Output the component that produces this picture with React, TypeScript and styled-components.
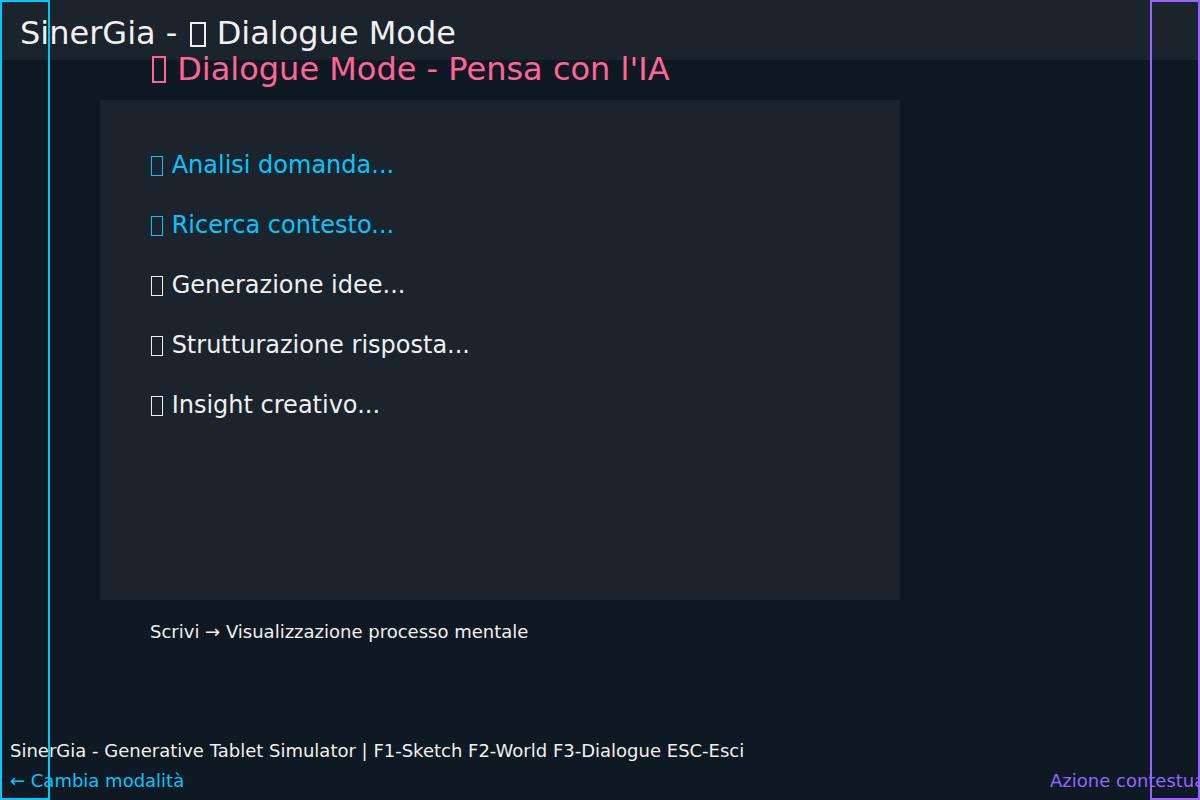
import React from 'react'
import styled, { createGlobalStyle } from 'styled-components'

const GlobalStyle = createGlobalStyle`
  html, body {
    margin: 0;
    padding: 0;
    background: #0f1923;
  }
  body {
    font-family: 'DejaVu Sans', 'Liberation Sans', sans-serif;
  }
`

const Screen = styled.div`
  position: relative;
  width: 1200px;
  height: 800px;
  overflow: hidden;
  background: #0f1923;
  color: #f0f0f0;
  display: flex;
  flex-direction: column;
`

const Header = styled.header`
  height: 60px;
  flex-shrink: 0;
  box-sizing: border-box;
  background: #1b232d;
  padding: 14px 0 0 20px;
  font-size: 32px;
  line-height: normal;
  white-space: pre;
  color: #f0f0f0;
`

const Subtitle = styled.h1`
  margin: -10px 0 0 150px;
  height: 50px;
  font-size: 32px;
  font-weight: normal;
  line-height: normal;
  white-space: pre;
  color: #ff6496;
`

const Panel = styled.section`
  width: 800px;
  height: 500px;
  flex-shrink: 0;
  margin-left: 100px;
  background: #1b232d;
  box-sizing: border-box;
  padding: 51px 0 0 50px;
  display: flex;
  flex-direction: column;
`

const Step = styled.div<{ $active?: boolean }>`
  height: 60px;
  font-size: 24px;
  line-height: normal;
  white-space: pre;
  color: ${(p) => (p.$active ? '#00c8ff' : '#f0f0f0')};
`

// missing-glyph box, as the emoji show up in the original render
const Tofu = styled.span<{ $w: number; $h: number; $stroke: number; $ml: number }>`
  display: inline-block;
  box-sizing: border-box;
  width: ${(p) => p.$w}px;
  height: ${(p) => p.$h}px;
  border: ${(p) => p.$stroke}px solid currentColor;
  margin: 0 1px 0 ${(p) => p.$ml}px;
  vertical-align: -3px;
`

const Hint = styled.div`
  margin: 21px 0 0 150px;
  font-size: 18px;
  line-height: normal;
  color: #f0f0f0;
`

const Footer = styled.footer`
  margin-top: auto;
  padding-left: 10px;
  font-size: 18px;
  line-height: normal;
  white-space: nowrap;
`

const FooterLine = styled.div`
  height: 30px;
  color: #f0f0f0;
`

const FooterRow = styled.div`
  height: 30px;
  display: grid;
  grid-template-columns: 1040px max-content;
`

const BackLink = styled.span`
  color: #00c8ff;
`

const ContextAction = styled.span`
  color: #9664ff;
`

const SideZone = styled.div<{ $side: 'left' | 'right'; $color: string }>`
  position: absolute;
  top: 0;
  ${(p) => (p.$side === 'left' ? 'left: 0;' : 'right: 0;')}
  width: 50px;
  height: 800px;
  box-sizing: border-box;
  border: 2px solid ${(p) => p.$color};
  pointer-events: none;
`

const steps = [
  { label: 'Analisi domanda...', active: true },
  { label: 'Ricerca contesto...', active: true },
  { label: 'Generazione idee...', active: false },
  { label: 'Strutturazione risposta...', active: false },
  { label: 'Insight creativo...', active: false },
]

export default function App() {
  return (
    <>
      <GlobalStyle />
      <Screen>
        <Header>
          {'SinerGia - '}
          <Tofu $w={16} $h={25} $stroke={2} $ml={2} />
          {' Dialogue Mode'}
        </Header>
        <Subtitle>
          <Tofu $w={14} $h={27} $stroke={2} $ml={2} />
          {" Dialogue Mode - Pensa con l'IA"}
        </Subtitle>
        <Panel>
          {steps.map((s) => (
            <Step key={s.label} $active={s.active}>
              <Tofu $w={12} $h={20} $stroke={1.5} $ml={1} />
              {' ' + s.label}
            </Step>
          ))}
        </Panel>
        <Hint>Scrivi → Visualizzazione processo mentale</Hint>
        <Footer>
          <FooterLine>
            SinerGia - Generative Tablet Simulator | F1-Sketch F2-World F3-Dialogue ESC-Esci
          </FooterLine>
          <FooterRow>
            <BackLink>← Cambia modalità</BackLink>
            <ContextAction>Azione contestuale</ContextAction>
          </FooterRow>
        </Footer>
        <SideZone $side="left" $color="#00c8ff" />
        <SideZone $side="right" $color="#9664ff" />
      </Screen>
    </>
  )
}
